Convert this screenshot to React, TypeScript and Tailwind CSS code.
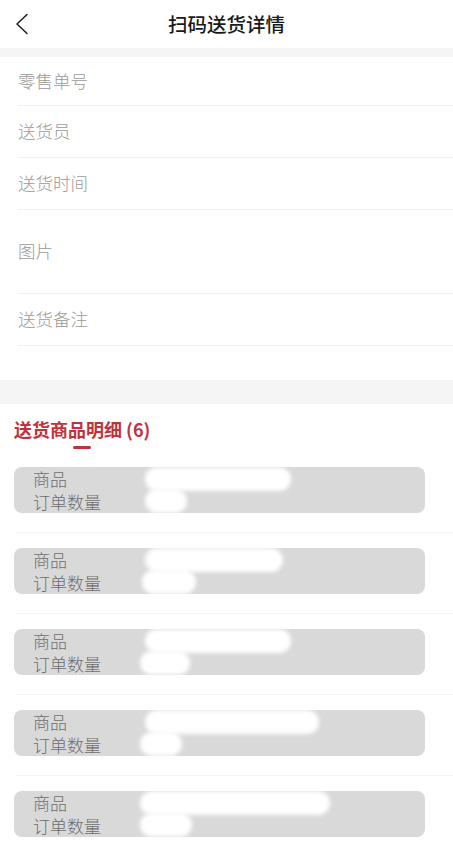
import React from "react";

const fields = [
  { label: "零售单号", h: "h-[49px]" },
  { label: "送货员", h: "h-[52px]" },
  { label: "送货时间", h: "h-[52px]" },
  { label: "图片", h: "h-[84px]" },
  { label: "送货备注", h: "h-[52px]" },
];

// widths of the masked-out values in each product row
const masks = [
  { top: "left-[131px] w-[146px]", bottom: "left-[131px] w-[42px]" },
  { top: "left-[131px] w-[138px]", bottom: "left-[128px] w-[54px]" },
  { top: "left-[131px] w-[146px]", bottom: "left-[126px] w-[50px]" },
  { top: "left-[131px] w-[174px]", bottom: "left-[126px] w-[42px]" },
  { top: "left-[126px] w-[190px]", bottom: "left-[126px] w-[52px]" },
];

export default function App() {
  return (
    <div
      className="w-[453px] min-h-[849px] bg-white overflow-hidden"
      style={{ fontFamily: '"Noto Sans CJK SC", "Noto Sans", sans-serif' }}
    >
      {/* Top bar */}
      <div className="relative h-12 flex items-center justify-center">
        <svg
          className="absolute left-[14px] top-[13px]"
          width="16"
          height="22"
          viewBox="0 0 16 22"
          fill="none"
          stroke="#222"
          strokeWidth="1.6"
          strokeLinecap="round"
          strokeLinejoin="round"
        >
          <path d="M13 1.5 L3 11 L13 20.5" />
        </svg>
        <h1 className="text-[19.5px] font-medium text-[#1a1a1a]">扫码送货详情</h1>
      </div>

      <div className="h-[9px] bg-[#f5f5f5]" />

      {/* Delivery info */}
      <div>
        {fields.map((f) => (
          <div key={f.label} className={`${f.h} flex flex-col`}>
            <div className="flex-1 flex items-center pl-[18px] text-[17.5px] font-light text-[#9a9a9a]">
              {f.label}
            </div>
            <div className="ml-[18px] h-px bg-[#f0f0f0]" />
          </div>
        ))}
      </div>

      <div className="h-[34px]" />
      <div className="h-[24px] bg-[#f5f5f5]" />

      {/* Product list */}
      <div className="pt-[13px]">
        <div className="px-[14px] inline-flex flex-col items-center">
          <h2 className="text-[18px] leading-6 font-bold text-[#c0323c]">送货商品明细 (6)</h2>
          <div className="mt-[5px] w-[18px] h-[3px] rounded-sm bg-[#c0323c]" />
        </div>

        <div className="mt-[18px]">
          {masks.map((m, i) => (
            <div key={i}>
              <div className="relative mx-[14px] w-[411px] h-[46px] rounded-[8px] bg-[#d9d9d9] pl-[19px] flex flex-col justify-center text-[17px] leading-[23px] font-light text-[#6e6e6e]">
                <span>商品</span>
                <span>订单数量</span>
                <div className={`absolute top-0 h-[24px] rounded-full bg-white blur-[2px] ${m.top}`} />
                <div className={`absolute bottom-0 h-[24px] rounded-full bg-white blur-[2px] ${m.bottom}`} />
              </div>
              {i < masks.length - 1 && <div className="ml-[15px] mt-[19px] mb-[15px] h-px bg-[#f3f3f3]" />}
            </div>
          ))}
        </div>
      </div>
    </div>
  );
}
